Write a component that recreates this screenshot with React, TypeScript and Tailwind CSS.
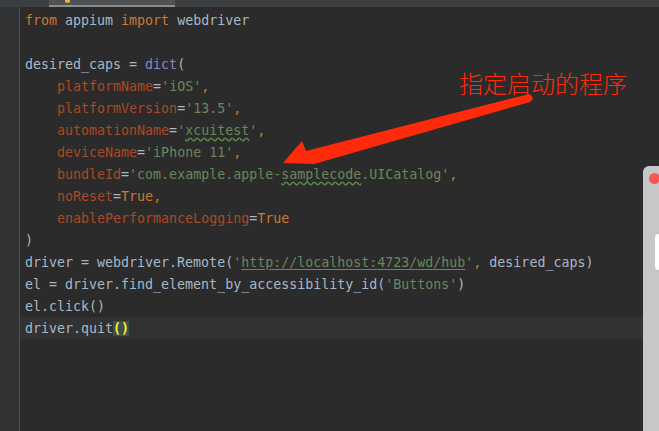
const C = {
  kw: "text-[#cc7832]",
  tx: "text-[#a9b7c6]",
  pa: "text-[#aa4926]",
  st: "text-[#6a8759]",
  bi: "text-[#8888c6]",
};

type Seg = { t: string; c?: string; x?: string };

const lines: Seg[][] = [
  [{ t: "from", c: C.kw }, { t: " appium " }, { t: "import", c: C.kw }, { t: " webdriver" }],
  [],
  [{ t: "desired_caps = " }, { t: "dict", c: C.bi }, { t: "(" }],
  [{ t: "    " }, { t: "platformName", c: C.pa }, { t: "=" }, { t: "'iOS'", c: C.st }, { t: ",", c: C.kw }],
  [{ t: "    " }, { t: "platformVersion", c: C.pa }, { t: "=" }, { t: "'13.5'", c: C.st }, { t: ",", c: C.kw }],
  [
    { t: "    " },
    { t: "automationName", c: C.pa },
    { t: "=" },
    { t: "'", c: C.st },
    { t: "xcuitest", c: C.st, x: "underline decoration-wavy decoration-[#5f8a4c] underline-offset-2" },
    { t: "'", c: C.st },
    { t: ",", c: C.kw },
  ],
  [{ t: "    " }, { t: "deviceName", c: C.pa }, { t: "=" }, { t: "'iPhone 11'", c: C.st }, { t: ",", c: C.kw }],
  [
    { t: "    " },
    { t: "bundleId", c: C.pa },
    { t: "=" },
    { t: "'com.example.apple-", c: C.st },
    { t: "samplecode", c: C.st, x: "underline decoration-wavy decoration-[#5f8a4c] underline-offset-2" },
    { t: ".UICatalog'", c: C.st },
    { t: ",", c: C.kw },
  ],
  [{ t: "    " }, { t: "noReset", c: C.pa }, { t: "=" }, { t: "True", c: C.kw }, { t: ",", c: C.kw }],
  [{ t: "    " }, { t: "enablePerformanceLogging", c: C.pa }, { t: "=" }, { t: "True", c: C.kw }],
  [{ t: ")" }],
  [
    { t: "driver = webdriver.Remote(" },
    { t: "'", c: C.st },
    { t: "http://localhost:4723/wd/hub", c: C.st, x: "underline decoration-[#6a8759] underline-offset-2" },
    { t: "'", c: C.st },
    { t: ",", c: C.kw },
    { t: " desired_caps)" },
  ],
  [{ t: "el = driver.find_element_by_accessibility_id(" }, { t: "'Buttons'", c: C.st }, { t: ")" }],
  [{ t: "el.click()" }],
];

export default function App() {
  return (
    <div className="relative w-[659px] h-[431px] overflow-hidden bg-[#2b2b2b] flex flex-col font-['DejaVu_Sans_Mono',monospace] text-[13.3px]">
      {/* tab strip */}
      <div className="h-[7px] flex bg-[#3c3f41]">
        <div className="w-[49px]" />
        <div className="w-[126px] bg-[#4e5254] border-b-2 border-[#8a8d90] relative">
          <div className="absolute left-[16px] top-0 w-[5px] h-[3px] rounded-b-sm bg-[#e8b73a]" />
        </div>
        <div className="flex-1" />
      </div>

      <div className="flex flex-1">
        <div className="w-[20px] bg-[#313335] border-r border-[#4e4e4e]" />
        <div className="flex-1 pt-[2px]">
          {lines.map((ln, i) => (
            <div key={i} className="h-[22px] leading-[23px] pl-[5px] whitespace-pre text-[#a9b7c6]">
              {ln.map((s, j) => (
                <span key={j} className={`${s.c ?? C.tx} ${s.x ?? ""}`}>
                  {s.t}
                </span>
              ))}
            </div>
          ))}
          <div className="h-[22px] leading-[23px] pl-[5px] whitespace-pre bg-[#323232] text-[#a9b7c6]">
            driver.quit
            <span className="bg-[#3b514d] text-[#ffef28] font-bold">()</span>
          </div>
        </div>
      </div>

      {/* annotation */}
      <div className="absolute left-[459px] top-[71px] text-[24px] leading-none text-[#ff2a0c] font-['Noto_Sans_CJK_SC',sans-serif] font-light">
        指定启动的程序
      </div>
      <svg className="absolute left-0 top-0" width="659" height="431" viewBox="0 0 659 431">
        <path d="M283 163 L302 141 L306 151 L529 94 Q536 98 530 102 L314 164 Z" fill="#ff2a0c" />
      </svg>

      {/* overlapping window */}
      <div className="absolute left-[643px] top-[166px] w-[30px] h-[280px] bg-[#c6c7c8] rounded-tl-[6px]">
        <div className="absolute left-[6px] top-[7px] w-[11px] h-[11px] rounded-full bg-[#fc5753]" />
        <div className="absolute left-[12px] top-[68px] w-[20px] h-[36px] rounded-[4px] bg-white" />
      </div>
    </div>
  );
}
